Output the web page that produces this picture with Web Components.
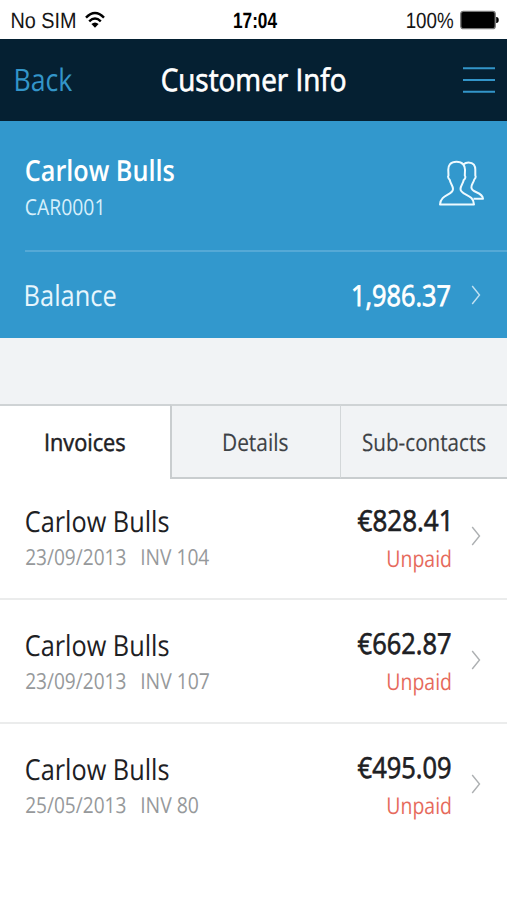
<!DOCTYPE html>
<html lang="en">
<head>
<meta charset="utf-8">
<title>Customer Info</title>
<style>
  html, body { margin: 0; background: #fff; }
  body { width: 507px; height: 900px; overflow: hidden; font-family: "Open Sans", "Noto Sans", sans-serif; }
</style>
</head>
<body>
<customer-screen></customer-screen>
<script>
// A single line of text condensed horizontally so its glyphs span exactly the `w` attribute.
// Measuring at ten times the size avoids rounding of the glyph bounds.
// `stroke` thickens the glyphs, for weights between regular and semibold.
const ctx = document.createElement('canvas').getContext('2d');
class FitText extends HTMLElement {
  connectedCallback() {
    if (this.shadowRoot) return;
    const size = +this.getAttribute('size');
    const w = +this.getAttribute('w');
    const line = +this.getAttribute('line') || Math.round(size * 1.25);
    const weight = this.getAttribute('weight') || 400;
    const stroke = this.getAttribute('stroke') || 0;
    const family = this.hasAttribute('system') ? '"Liberation Sans", Arial, sans-serif' : '"Open Sans", "Noto Sans", sans-serif';
    ctx.font = `${weight} ${size * 10}px ${family}`;
    const m = ctx.measureText(this.textContent.trim());
    const k = w / ((m.actualBoundingBoxLeft + m.actualBoundingBoxRight) / 10);
    const shift = m.actualBoundingBoxLeft / 10 * k;
    this.attachShadow({ mode: 'open' }).innerHTML = `
      <style>
        :host { display: block; flex: none; width: ${w}px; height: ${line}px; }
        span { display: inline-block; white-space: pre; font: ${weight} ${size}px/${line}px ${family.replace(/"/g, "'")};
               text-rendering: geometricPrecision; -webkit-text-stroke: ${stroke}px currentColor;
               transform-origin: 0 50%; transform: translateX(${shift}px) scaleX(${k}); }
      </style><span><slot></slot></span>`;
  }
}
customElements.define('fit-text', FitText);

function define(name, html) {
  customElements.define(name, class extends HTMLElement {
    constructor() {
      super();
      const t = document.createElement('template');
      t.innerHTML = html;
      this.attachShadow({ mode: 'open' }).append(t.content.cloneNode(true));
    }
  });
}

define('chevron-icon', `
  <style>:host { display: block; flex: none; width: 10px; height: 20px; } svg { display: block; }</style>
  <svg width="10" height="20" viewBox="0 0 10 20" fill="none" stroke="currentColor" stroke-width="1.4"><path d="M1.2 1 8.5 10 1.2 19"/></svg>`);

define('status-bar', `
  <style>
    :host { display: flex; height: 39px; background: #fff; color: #161616; padding: 0 8px 0 11.5px; box-sizing: border-box; }
    .left, .right { display: flex; flex: 1; align-items: flex-start; }
    .right { justify-content: flex-end; }
    .left, .right, .time { padding-top: 7px; }
    .time { color: #000; }
    svg { display: block; }
    .wifi { margin: 3.5px 0 0 10.5px; }
    .battery { margin: 3px 0 0 7px; }
  </style>
  <div class="left"><fit-text system size="22" w="63" line="27">No SIM</fit-text>
    <svg class="wifi" width="20" height="18" viewBox="0 0 20 18" fill="none" stroke="#000" stroke-width="2.4"><path d="M1 6.6Q10-2.6 19 6.6M4.2 10.4Q10 4.6 15.8 10.4"/><path d="M6.4 13.1Q10 9.7 13.6 13.1L10 16.8Z" fill="#000" stroke="none"/></svg>
  </div>
  <div class="time"><fit-text system size="22" weight="700" w="43" line="27">17:04</fit-text></div>
  <div class="right"><fit-text system size="22" w="46" line="27">100%</fit-text>
    <svg class="battery" width="39" height="20" viewBox="0 0 39 20"><rect x=".8" y="1.3" width="34.4" height="17.4" rx="2.5" fill="#000" stroke="#777" stroke-width="1.3"/><path d="M36.2 7h.8q1.8.6 1.8 3T37 13h-.8Z" fill="#000"/></svg>
  </div>`);

define('nav-bar', `
  <style>
    :host { display: flex; height: 82px; box-sizing: border-box; background: #052032; align-items: flex-start; padding: 22px 12.5px 0 15.7px; }
    .side { flex: 1; display: flex; color: #3395c9; }
    .end { justify-content: flex-end; }
    .title { color: #fff; padding-right: 3px; }
    svg { display: block; margin-top: 5px; }
  </style>
  <div class="side"><fit-text size="31" w="56.5" line="38">Back</fit-text></div>
  <div class="title"><fit-text size="31" stroke=".7" w="183" line="38">Customer Info</fit-text></div>
  <div class="side end"><svg width="32" height="28" viewBox="0 0 32 28" stroke="#3395c9" stroke-width="2"><path d="M0 2.2H32M0 14H32M0 25.8H32"/></svg></div>`);

define('customer-header', `
  <style>
    :host { display: block; height: 217px; background: #3298cd; color: #fff; }
    .who { display: flex; justify-content: space-between; height: 129px; box-sizing: border-box; margin-left: 25.6px; padding: 32px 23.5px 0 0; }
    .names { display: flex; flex-direction: column; gap: 4px; }
    .id { color: #d6effb; }
    svg { display: block; margin-top: 6.5px; }
    .rule { height: 2px; margin-left: 25px; background: #55a9d6; }
    .balance { display: flex; align-items: flex-start; padding: 26px 26.5px 0 26.3px; color: #e7f6fd; }
    .balance .sum { color: #fff; margin-left: auto; }
    chevron-icon { margin: 7px 0 0 21px; color: #c1e1f2; }
  </style>
  <div class="who">
    <div class="names"><fit-text size="29" weight="600" w="148" line="36">Carlow Bulls</fit-text>
    <fit-text class="id" size="22" w="75.3" line="28">CAR0001</fit-text></div>
    <svg width="45" height="46" viewBox="0 0 45 46" fill="none" stroke="#eefaff" stroke-width="2" stroke-linejoin="round"><path d="M17.5 1.7C11.5 1.7 9 5.5 9.3 10.5L9.5 15.5C8.5 17 9.8 19 10.8 20C11.5 24 14 25.5 14 29C14 35.5 1.5 34 1 44.5H35C35 34 21.5 35.5 21.5 29C21.5 25.5 24 24 24.7 20C26 19 27 17 25.8 15.5L26 10.5C26.3 5.5 23.5 1.7 17.5 1.7Z"/><path d="M24.2 4.5C26 3 27.5 2.4 29.5 2.4C34.5 2.4 36.5 5.5 36.3 10.5V15.5C37.2 17 36.2 18.6 35.2 19.6C34.5 23 32.4 24 32.4 27.5C32.4 33 43.5 31.5 44 38.8H34.5"/></svg>
  </div>
  <div class="rule"></div>
  <div class="balance"><fit-text size="29" w="89.5" line="36">Balance</fit-text>
  <fit-text class="sum" size="29" stroke=".8" w="97" line="36">1,986.37</fit-text>
  <chevron-icon></chevron-icon></div>`);

define('tab-strip', `
  <style>
    :host { display: flex; height: 75px; box-sizing: border-box; margin-top: 66px; }
    ::slotted(*) { flex: none; box-sizing: border-box; height: 75px; display: flex; justify-content: center; padding-top: 22px;
      border-top: 2px solid #cfd3d5; border-bottom: 2px solid #c9cdcf; color: #3d4145; }
    ::slotted(:nth-child(1)) { width: 170px; padding-left: 1px; background: #fff; border-bottom-color: #fff; color: #1d2023; }
    ::slotted(:nth-child(2)) { width: 170px; border-left: 2px solid #c9cdcf; }
    ::slotted(:nth-child(3)) { width: 167px; border-left: 1px solid #d3d7d9; }
  </style><slot></slot>`);

define('invoice-row', `
  <style>
    :host { display: flex; height: 123.7px; box-sizing: border-box; padding: 0 26.5px 0 25.6px; border-bottom: 2px solid #ebecec; color: #1d2023; }
    :host(:last-child) { border-bottom-color: transparent; }
    .main { display: flex; flex-direction: column; padding-top: 27.7px; }
    .meta { display: flex; gap: 17px; color: #96999b; margin-top: 3px; }
    .amounts { display: flex; flex-direction: column; align-items: flex-end; margin-left: auto; padding-top: 26px; }
    .state { color: #e66a5c; margin-top: 5px; }
    chevron-icon { margin: 49.7px 0 0 20px; color: #adb0b2; }
  </style>
  <div class="main"><slot name="name"></slot><div class="meta"><slot name="date"></slot><slot name="number"></slot></div></div>
  <div class="amounts"><slot name="amount"></slot><div class="state"><fit-text size="23" w="62.3" line="29">Unpaid</fit-text></div></div>
  <chevron-icon></chevron-icon>`);

define('customer-screen', `
  <style>
    :host { display: flex; flex-direction: column; width: 507px; height: 900px; background: #fff; }
    .gray { background: #f1f3f5; display: flex; flex-direction: column; }
    .list { display: flex; flex-direction: column; margin-top: -2.5px; }
    .short { margin-right: 2.5px; }
  </style>
  <status-bar></status-bar>
  <nav-bar></nav-bar>
  <customer-header></customer-header>
  <div class="gray"><tab-strip>
    <div><fit-text size="24" stroke=".5" w="78.7" line="30">Invoices</fit-text></div>
    <div><fit-text size="24" stroke=".15" w="63.5" line="30">Details</fit-text></div>
    <div><fit-text size="24" stroke=".15" w="122.3" line="30">Sub-contacts</fit-text></div>
  </tab-strip></div>
  <div class="list">
    <invoice-row>
      <fit-text slot="name" size="29" w="142.5" line="36">Carlow Bulls</fit-text>
      <fit-text slot="date" size="22" w="99.3" line="28">23/09/2013</fit-text>
      <fit-text slot="number" size="22" w="67" line="28">INV 104</fit-text>
      <fit-text slot="amount" class="short" size="29" stroke=".7" w="90" line="36">€828.41</fit-text>
    </invoice-row>
    <invoice-row>
      <fit-text slot="name" size="29" w="142.5" line="36">Carlow Bulls</fit-text>
      <fit-text slot="date" size="22" w="99.3" line="28">23/09/2013</fit-text>
      <fit-text slot="number" size="22" w="67" line="28">INV 107</fit-text>
      <fit-text slot="amount" size="29" stroke=".7" w="92.5" line="36">€662.87</fit-text>
    </invoice-row>
    <invoice-row>
      <fit-text slot="name" size="29" w="142.5" line="36">Carlow Bulls</fit-text>
      <fit-text slot="date" size="22" w="99.3" line="28">25/05/2013</fit-text>
      <fit-text slot="number" size="22" w="56" line="28">INV 80</fit-text>
      <fit-text slot="amount" size="29" stroke=".7" w="92.5" line="36">€495.09</fit-text>
    </invoice-row>
  </div>`);
</script>
</body>
</html>
